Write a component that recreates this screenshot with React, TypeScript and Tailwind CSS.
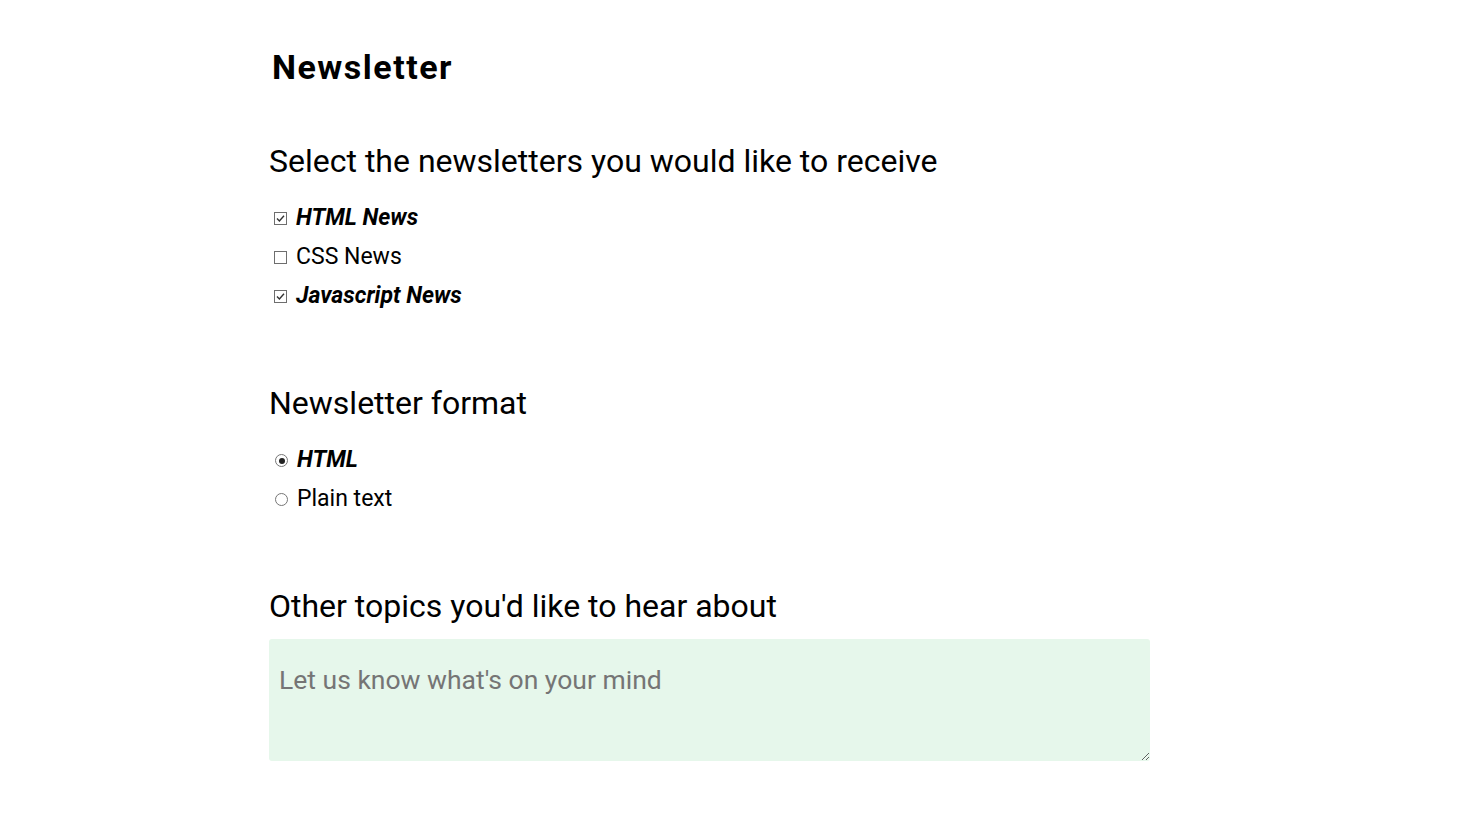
import React from 'react';

const font = { fontFamily: 'Roboto, "Noto Sans", sans-serif' };

function Check({ checked }: { checked?: boolean }) {
  return (
    <span className="ml-[5px] flex h-[13px] w-[13px] shrink-0 items-center justify-center border-[1.5px] border-[#6e6e6e] bg-white">
      {checked && (
        <svg width="9" height="9" viewBox="0 0 9 9" fill="none">
          <path d="M1 4.6 L3.4 7 L8 1.8" stroke="#333" strokeWidth="1.4" />
        </svg>
      )}
    </span>
  );
}

function Radio({ checked }: { checked?: boolean }) {
  return (
    <span className="ml-[6px] flex h-[13px] w-[13px] shrink-0 items-center justify-center rounded-full border border-[#767676] bg-white">
      {checked && <span className="h-[6px] w-[6px] rounded-full bg-[#222]" />}
    </span>
  );
}

export default function App() {
  return (
    <div className="h-screen overflow-hidden bg-white text-black" style={font}>
      <form className="ml-[269px] w-[881px]">
        <h1 className="mt-[47px] pl-[3px] text-[34px] font-bold leading-[40px] tracking-[1.5px]">Newsletter</h1>

        <fieldset className="mt-[54px]">
          <legend className="text-[32px] leading-[40px]">Select the newsletters you would like to receive</legend>
          <div className="mt-[18px]">
            <label className="flex h-[39px] items-center gap-[9px] text-[23px] font-bold italic">
              <Check checked />
              HTML News
            </label>
            <label className="flex h-[39px] items-center gap-[9px] text-[23px]">
              <Check />
              CSS News
            </label>
            <label className="flex h-[39px] items-center gap-[9px] text-[23px] font-bold italic">
              <Check checked />
              Javascript News
            </label>
          </div>
        </fieldset>

        <fieldset className="mt-[67px]">
          <legend className="text-[32px] leading-[40px]">Newsletter format</legend>
          <div className="mt-[18px]">
            <label className="flex h-[39px] items-center gap-[9px] text-[23px] font-bold italic">
              <Radio checked />
              HTML
            </label>
            <label className="flex h-[39px] items-center gap-[9px] text-[23px]">
              <Radio />
              Plain text
            </label>
          </div>
        </fieldset>

        <div className="mt-[67px]">
          <label htmlFor="topics" className="block text-[32px] leading-[40px]">Other topics you'd like to hear about</label>
          <textarea
            id="topics"
            placeholder="Let us know what's on your mind"
            className="mt-[13px] block h-[122px] w-full rounded-[3px] bg-[#e6f7eb] px-[10px] py-[20px] text-[26.5px] leading-[42px] placeholder:text-[#757575] outline-none"
          />
        </div>
      </form>
    </div>
  );
}
